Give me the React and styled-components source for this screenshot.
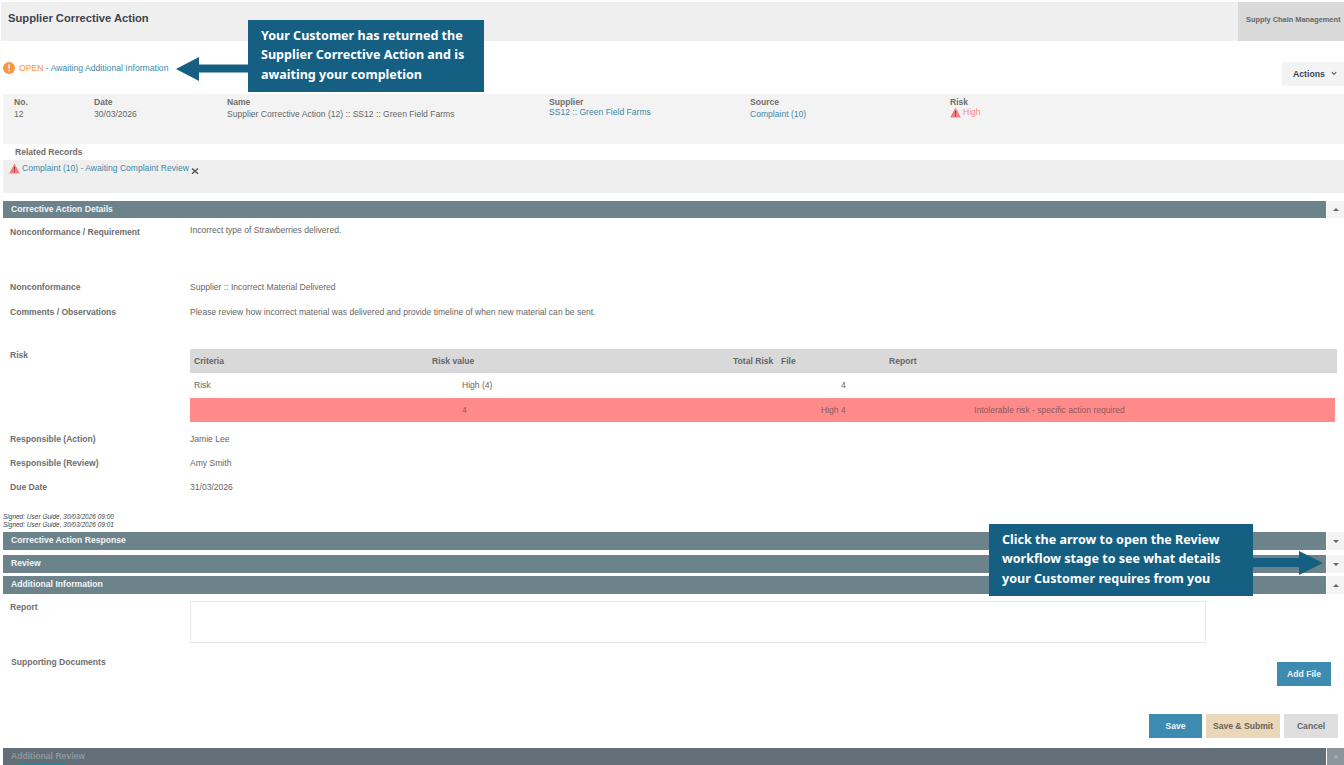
import React from "react";
import styled, { createGlobalStyle } from "styled-components";

const GlobalStyle = createGlobalStyle`
  html, body {
    margin: 0;
    padding: 0;
    background: #fff;
    overflow: hidden;
  }
  body {
    font-family: "Liberation Sans", Arial, sans-serif;
    font-size: 8.57px;
    color: #666;
  }
`;

const Page = styled.div`
  position: relative;
  width: 1344px;
  height: 765px;
  overflow: hidden;
  padding-top: 2px;
  box-sizing: border-box;
`;

const Header = styled.div`
  height: 39px;
  margin-left: 1px;
  display: flex;
  justify-content: space-between;
  background: #efefef;
`;

const Title = styled.h1`
  margin: 8px 0 0 7px;
  font-size: 11.2px;
  line-height: 16px;
  font-weight: 700;
  color: #3a4450;
`;

const ModuleTab = styled.div`
  width: 106px;
  padding: 13px 0 0 8px;
  box-sizing: border-box;
  background: #d9d9d9;
  font-size: 7.4px;
  line-height: 10px;
  font-weight: 700;
  white-space: nowrap;
  color: #666;
`;

const StatusRow = styled.div`
  height: 53px;
  display: flex;
  justify-content: space-between;
  padding-left: 3px;
`;

const Status = styled.div`
  display: flex;
  align-items: center;
  gap: 4px;
  height: 54px;
  font-size: 8.65px;
`;

const Open = styled.span`
  color: #fb9a56;
  -webkit-text-stroke: 0.15px #fb9a56;
`;

const LinkText = styled.span`
  color: #4289a9;
`;

const ActionsButton = styled.div`
  width: 62px;
  height: 24px;
  margin-top: 21px;
  display: flex;
  align-items: center;
  gap: 6px;
  padding: 0 0 1px 11px;
  box-sizing: border-box;
  background: #f3f3f3;
  font-size: 8.7px;
  font-weight: 700;
  color: #3f4650;
`;

const Summary = styled.div`
  height: 50px;
  margin-left: 3px;
  padding: 3px 0 0 11px;
  box-sizing: border-box;
  display: grid;
  grid-template-columns: 80px 133px 322px 201px 200px 1fr;
  background: #f3f3f3;
  line-height: 11px;
`;

const SummaryCell = styled.div`
  display: flex;
  flex-direction: column;
`;

const SummaryLabel = styled.span`
  font-weight: 700;
  color: #6e6e6e;
`;

const SummaryValue = styled.span`
  margin-top: ${(p) => (p.$tight ? -1 : 1)}px;
  display: flex;
  align-items: center;
  gap: 2px;
  color: ${(p) => p.$color || "#666"};
`;

const RelatedTitle = styled.div`
  height: 15px;
  margin: 1px 2px 0 3px;
  padding-left: 12px;
  line-height: 15px;
  background: #fff;
  font-weight: 700;
  color: #6e6e6e;
`;

const RelatedBody = styled.div`
  height: 33px;
  margin-left: 3px;
  padding: 3px 0 0 6px;
  box-sizing: border-box;
  display: flex;
  align-items: flex-start;
  gap: 2px;
  background: #efefef;
  line-height: 11px;
`;

const SectionBar = styled.div`
  display: flex;
  gap: 1px;
  height: ${(p) => p.$h || 18}px;
  margin: ${(p) => p.$top || 0}px 0 0 3px;
`;

const SectionTitle = styled.div`
  flex: 1;
  padding-left: 8px;
  line-height: 17px;
  font-weight: 700;
  font-size: 8.6px;
  background: ${(p) => (p.$dim ? "#626f78" : "#6c838c")};
  color: ${(p) => (p.$dim ? "#8d979d" : "#f2f5f6")};
`;

const Toggle = styled.div`
  width: 17px;
  display: flex;
  align-items: center;
  justify-content: center;
  background: ${(p) => (p.$dim ? "#8b959b" : "#f3f3f3")};
`;

const Caret = styled.i`
  width: 0;
  height: 0;
  border-left: 3px solid transparent;
  border-right: 3px solid transparent;
  ${(p) => (p.$up ? "border-bottom" : "border-top")}: 3px solid ${(p) => (p.$dim ? "#a8b0b5" : "#666")};
`;

const Field = styled.div`
  display: grid;
  grid-template-columns: 180px 1fr;
  height: ${(p) => p.$h}px;
  margin-top: ${(p) => p.$mt || 0}px;
  padding-left: 10px;
  line-height: 11px;
`;

const FieldLabel = styled.div`
  padding-top: ${(p) => p.$top ?? 2}px;
  font-weight: 700;
  color: #6e6e6e;
`;

const FieldValue = styled.div`
  color: #666;
  padding-top: ${(p) => p.$top ?? 0}px;
`;

const RiskTable = styled.div`
  width: 1147px;
  margin-top: 7px;
  display: flex;
  flex-direction: column;
  gap: 1px;
`;

const RiskRow = styled.div`
  height: ${(p) => p.$h || 24}px;
  display: grid;
  grid-template-columns: ${(p) => p.$cols};
  align-items: center;
  padding-left: 4px;
  width: ${(p) => (p.$alert ? "1145px" : "auto")};
  box-sizing: border-box;
  background: ${(p) => (p.$alert ? "#ff8a8a" : p.$head ? "#d9d9d9" : "#fff")};
  color: ${(p) => (p.$alert ? "#8f5a5a" : "#666")};
  font-weight: ${(p) => (p.$head ? 700 : 400)};
`;

const Signed = styled.div`
  margin: 33px 0 0 3px;
  height: 19px;
  font-size: 6.5px;
  line-height: 8px;
  font-style: italic;
  color: #444;
`;

const ReportBox = styled.div`
  width: 1016px;
  height: 42px;
  box-sizing: border-box;
  border: 1px solid #e4ebe6;
  background: #fff;
`;

const DocsRow = styled.div`
  display: flex;
  justify-content: space-between;
  height: 57px;
  padding: 14px 13px 0 11px;
  line-height: 11px;
`;

const Button = styled.div`
  width: ${(p) => p.$w || 54}px;
  height: 24px;
  display: flex;
  align-items: center;
  justify-content: center;
  font-weight: 700;
  font-size: 8.6px;
  box-sizing: border-box;
  background: ${(p) => p.$bg};
  color: ${(p) => p.$color};
`;

const AddFile = styled(Button)`
  margin-top: 5px;
`;

const ButtonRow = styled.div`
  display: flex;
  justify-content: flex-end;
  gap: 4px;
  padding-right: 6px;
`;

const Callout = styled.div`
  position: absolute;
  left: ${(p) => p.$x}px;
  top: ${(p) => p.$y}px;
  width: ${(p) => p.$w}px;
  height: 72px;
  padding: 6px 0 0 13px;
  box-sizing: border-box;
  background: #156082;
  color: #fff;
  font-family: "Noto Sans", sans-serif;
  font-weight: 700;
  font-size: 12.55px;
  line-height: 19.4px;
  white-space: nowrap;
`;

const Arrow = styled.svg`
  position: absolute;
  left: ${(p) => p.$x}px;
  top: ${(p) => p.$y}px;
`;

const ToastEdge = styled.div`
  position: absolute;
  left: 19px;
  bottom: 0;
  width: 47px;
  height: 2px;
  background: #1f8a95;
`;

function WarnIcon() {
  return (
    <svg width="11" height="11" viewBox="0 0 11 11">
      <path d="M5.5 .5 L10.8 10.5 H.2 Z" fill="#f47c7c" />
      <path d="M5 4 H6 L5.8 7.6 H5.2 Z M5 8.3 H6 V9.3 H5 Z" fill="#7a2b2b" />
    </svg>
  );
}

function StatusIcon() {
  return (
    <svg width="12" height="12" viewBox="0 0 12 12">
      <circle cx="6" cy="6" r="6" fill="#f79646" />
      <path d="M5.2 2.6 H6.8 L6.5 7 H5.5 Z M5.3 7.9 H6.7 V9.3 H5.3 Z" fill="#fff" />
    </svg>
  );
}

function CloseIcon() {
  return (
    <svg width="8" height="8" viewBox="0 0 8 8" style={{ marginTop: 4 }}>
      <path d="M1 1.5 L7 6.8 M7 1.5 L1 6.8" stroke="#555" strokeWidth="1.5" />
    </svg>
  );
}

function ChevronIcon() {
  return (
    <svg width="6" height="5" viewBox="0 0 6 5">
      <path d="M.8 1 L3 3.4 L5.2 1" fill="none" stroke="#555" strokeWidth="1.1" />
    </svg>
  );
}

function Section({ title, open, dim, top, h }) {
  return (
    <SectionBar $top={top} $h={h}>
      <SectionTitle $dim={dim}>{title}</SectionTitle>
      <Toggle $dim={dim}>
        <Caret $up={open} $dim={dim} />
      </Toggle>
    </SectionBar>
  );
}

const HEAD_COLS = "238px 301px 48px 108px 1fr";
const ROW_COLS = "268px 379px 1fr";
const ALERT_COLS = "268px 359px 153px 1fr";

export default function App() {
  return (
    <Page>
      <GlobalStyle />
      <Header>
        <Title>Supplier Corrective Action</Title>
        <ModuleTab>Supply Chain Management</ModuleTab>
      </Header>

      <StatusRow>
        <Status>
          <StatusIcon />
          <span>
            <Open>OPEN</Open> <LinkText>- Awaiting Additional Information</LinkText>
          </span>
        </Status>
        <ActionsButton>
          Actions <ChevronIcon />
        </ActionsButton>
      </StatusRow>

      <Summary>
        <SummaryCell>
          <SummaryLabel>No.</SummaryLabel>
          <SummaryValue>12</SummaryValue>
        </SummaryCell>
        <SummaryCell>
          <SummaryLabel>Date</SummaryLabel>
          <SummaryValue>30/03/2026</SummaryValue>
        </SummaryCell>
        <SummaryCell>
          <SummaryLabel>Name</SummaryLabel>
          <SummaryValue>Supplier Corrective Action (12) :: SS12 :: Green Field Farms</SummaryValue>
        </SummaryCell>
        <SummaryCell>
          <SummaryLabel>Supplier</SummaryLabel>
          <SummaryValue $tight $color="#4289a9">SS12 :: Green Field Farms</SummaryValue>
        </SummaryCell>
        <SummaryCell>
          <SummaryLabel>Source</SummaryLabel>
          <SummaryValue $color="#4289a9">Complaint (10)</SummaryValue>
        </SummaryCell>
        <SummaryCell>
          <SummaryLabel>Risk</SummaryLabel>
          <SummaryValue $tight $color="#f98a8a">
            <WarnIcon /> High
          </SummaryValue>
        </SummaryCell>
      </Summary>

      <RelatedTitle>Related Records</RelatedTitle>
      <RelatedBody>
        <WarnIcon />
        <LinkText>Complaint (10) - Awaiting Complaint Review</LinkText>
        <CloseIcon />
      </RelatedBody>

      <Section title="Corrective Action Details" open top={8} h={17} />

      <Field $h={55} $mt={7}>
        <FieldLabel>Nonconformance / Requirement</FieldLabel>
        <FieldValue>Incorrect type of Strawberries delivered.</FieldValue>
      </Field>
      <Field $h={25}>
        <FieldLabel>Nonconformance</FieldLabel>
        <FieldValue $top={2}>Supplier :: Incorrect Material Delivered</FieldValue>
      </Field>
      <Field $h={37}>
        <FieldLabel>Comments / Observations</FieldLabel>
        <FieldValue $top={2}>
          Please review how incorrect material was delivered and provide timeline of when new material can be sent.
        </FieldValue>
      </Field>
      <Field $h={84}>
        <FieldLabel $top={8}>Risk</FieldLabel>
        <RiskTable>
          <RiskRow $head $cols={HEAD_COLS}>
            <span>Criteria</span>
            <span>Risk value</span>
            <span>Total Risk</span>
            <span>File</span>
            <span>Report</span>
          </RiskRow>
          <RiskRow $h={23} $cols={ROW_COLS}>
            <span>Risk</span>
            <span>High (4)</span>
            <span>4</span>
          </RiskRow>
          <RiskRow $alert $cols={ALERT_COLS}>
            <span />
            <span>4</span>
            <span>High 4</span>
            <span>Intolerable risk - specific action required</span>
          </RiskRow>
        </RiskTable>
      </Field>
      <Field $h={24} $mt={6}>
        <FieldLabel>Responsible (Action)</FieldLabel>
        <FieldValue $top={2}>Jamie Lee</FieldValue>
      </Field>
      <Field $h={24}>
        <FieldLabel>Responsible (Review)</FieldLabel>
        <FieldValue $top={2}>Amy Smith</FieldValue>
      </Field>
      <Field $h={0}>
        <FieldLabel>Due Date</FieldLabel>
        <FieldValue $top={2}>31/03/2026</FieldValue>
      </Field>

      <Signed>
        Signed: User Guide, 30/03/2026 09:00
        <br />
        Signed: User Guide, 30/03/2026 09:01
      </Signed>

      <Section title="Corrective Action Response" />
      <Section title="Review" top={5} />
      <Section title="Additional Information" open top={3} />

      <Field $h={42} $mt={7}>
        <FieldLabel $top={1}>Report</FieldLabel>
        <ReportBox />
      </Field>

      <DocsRow>
        <FieldLabel $top={0}>Supporting Documents</FieldLabel>
        <AddFile $bg="#3d8bb0" $color="#eef6fa">Add File</AddFile>
      </DocsRow>

      <ButtonRow>
        <Button $w={53} $bg="#3d8bb0" $color="#eef6fa">Save</Button>
        <Button $w={74} $bg="#ead6b8" $color="#6a6257">Save &amp; Submit</Button>
        <Button $bg="#dedede" $color="#666">Cancel</Button>
      </ButtonRow>

      <Section title="Additional Review" open dim top={10} h={17} />
      <ToastEdge />

      <Callout $x={248} $y={20} $w={236}>
        Your Customer has returned the
        <br />
        Supplier Corrective Action and is
        <br />
        awaiting your completion
      </Callout>
      <Arrow $x={176} $y={57} width="72" height="24" viewBox="0 0 72 24">
        <path d="M0 12 L23 0 V7.5 H72 V15.5 H23 V24 Z" fill="#156082" />
      </Arrow>

      <Callout $x={989} $y={524} $w={264}>
        Click the arrow to open the Review
        <br />
        workflow stage to see what details
        <br />
        your Customer requires from you
      </Callout>
      <Arrow $x={1253} $y={551} width="70" height="24" viewBox="0 0 70 24">
        <path d="M70 12 L46 0 V7 H0 V16 H46 V24 Z" fill="#156082" />
      </Arrow>
    </Page>
  );
}
